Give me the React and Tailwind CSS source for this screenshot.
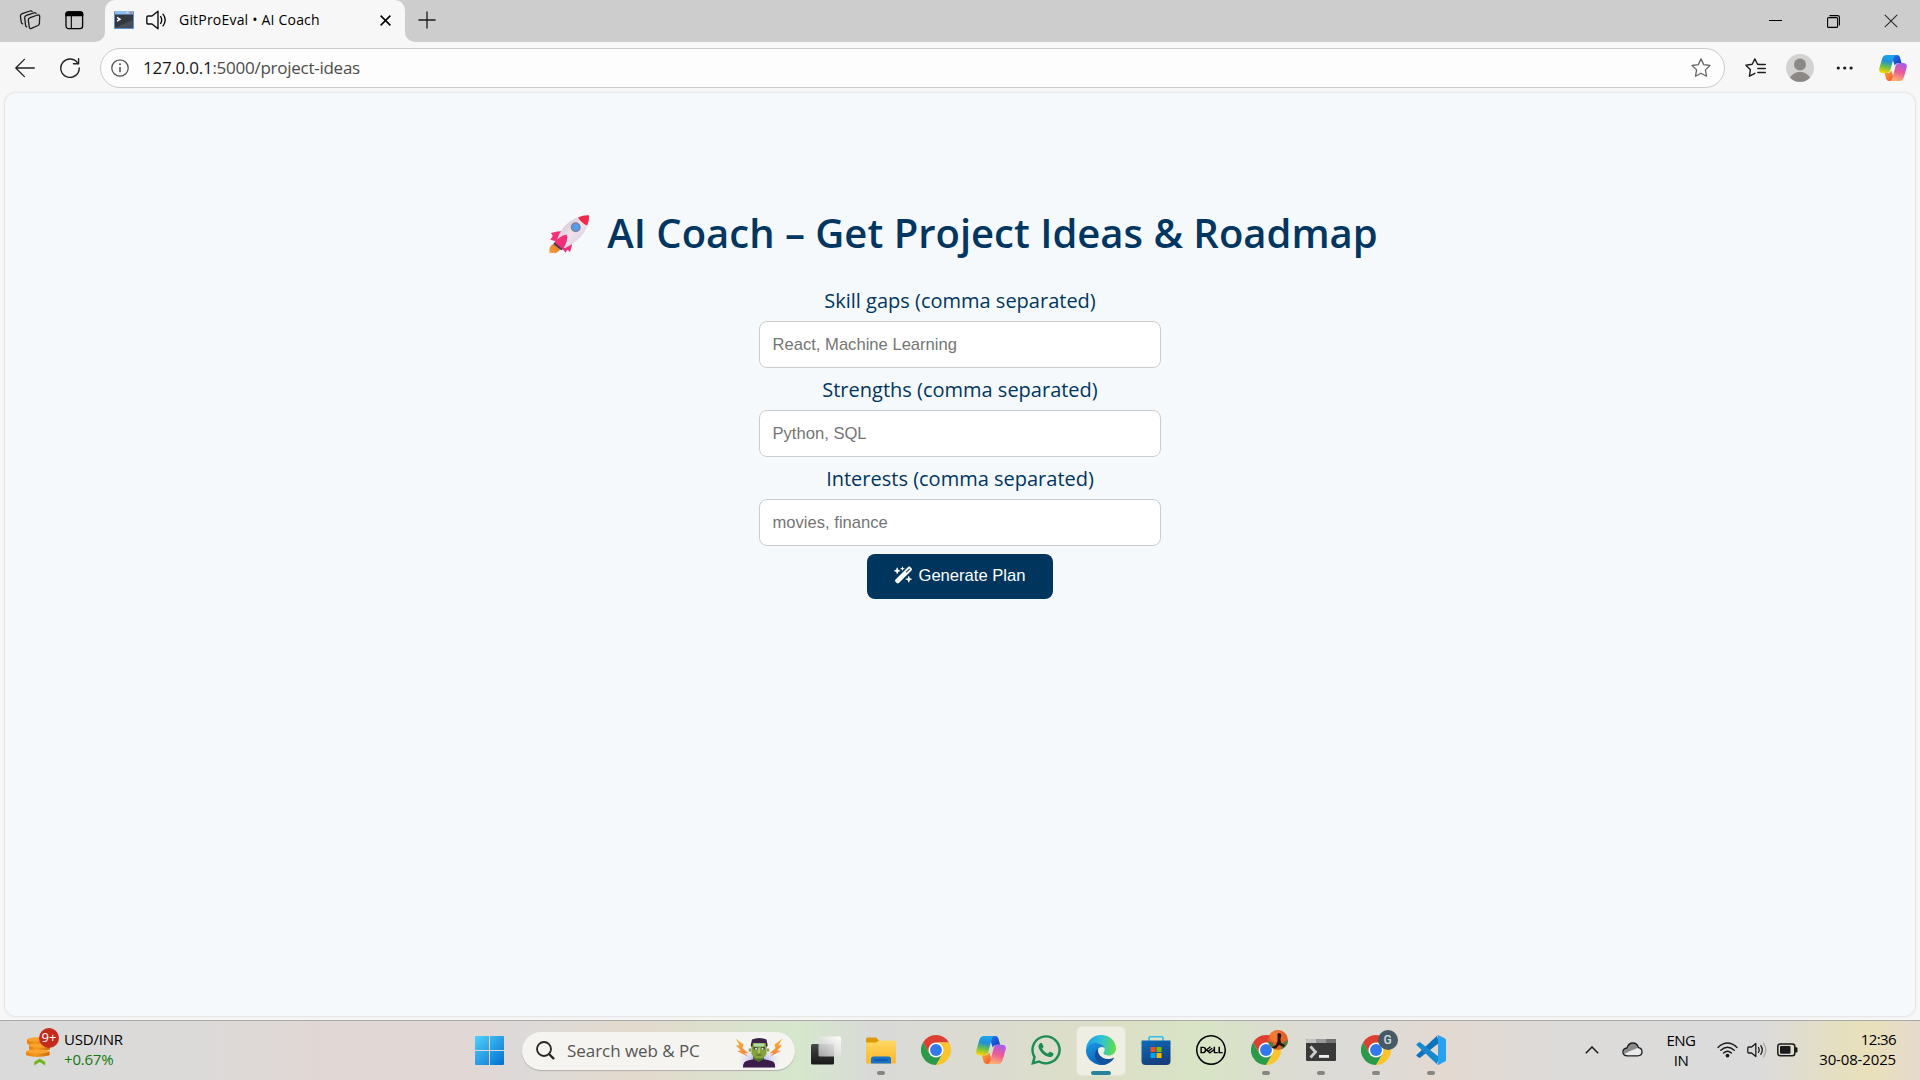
import React from "react";
import { FaWhatsapp } from "react-icons/fa";
import { FaWandMagicSparkles } from "react-icons/fa6";
import { SiDell } from "react-icons/si";

/* ---------- browser chrome icons ---------- */

const WorkspacesIcon = () => (
  <svg className="h-[20px] w-[22px]" viewBox="0 0 22 20" fill="none" stroke="#1b1b1b" strokeWidth="1.3" strokeLinejoin="round" strokeLinecap="round">
    <path d="M11.2 7.6 L18.6 5 Q20.6 4.6 20.7 6.4 L20.4 13.4 Q20.3 14.9 19 15.5 L12.4 18.4 Q10.6 19 10.3 17.2 L9.3 10 Q9.2 8.4 11.2 7.6Z" />
    <path d="M17 3.2 Q16.2 2.3 15 2.8 L7.4 5.3 Q5.5 6.1 5.7 7.8 L6.6 15.6 Q6.8 16.5 7.6 16.9" />
    <path d="M13.2 1.4 Q12.2 .6 11 1 L3.2 3.6 Q1.3 4.3 1.4 6.1 L2.3 12.4 Q2.5 13.5 3.6 13.9" />
  </svg>
);
const TabActionsIcon = () => (
  <svg className="h-[19px] w-[19px]" viewBox="0 0 19 19">
    <rect x="1" y="1" width="16.6" height="16.6" rx="2.6" fill="none" stroke="#000" strokeWidth="1.3" />
    <path d="M.3 5.2V3.2A2.8 2.8 0 0 1 3.1.3h12.4a2.8 2.8 0 0 1 2.8 2.9v2z" fill="#000" />
    <path d="M6.3 5v12.5" stroke="#000" strokeWidth="1.1" />
  </svg>
);
const Favicon = () => (
  <svg className="h-[18px] w-[20px]" viewBox="0 0 20 18">
    <rect width="20" height="18" rx="1" fill="#5b8fd0" />
    <rect x="1" width="18" height="3.4" fill="#8fbdf0" />
    <rect x="15.8" y=".6" width="2.4" height="2" fill="#e0696a" />
    <rect x="12.4" y=".8" width="2" height="1.4" fill="#d5e6fb" />
    <rect x="1" y="3.6" width="18" height="13.2" fill="#34383f" />
    <path d="M1 16.8 19 9v7.8z" fill="#4a4f57" />
    <path d="M3 6.4l3 1.9-3 1.9" fill="none" stroke="#fff" strokeWidth="1.5" />
  </svg>
);
const SpeakerIcon = () => (
  <svg className="h-[20px] w-[21px]" viewBox="0 0 21 20" fill="none" stroke="#111" strokeWidth="1.4" strokeLinejoin="round" strokeLinecap="round">
    <path d="M12 1.2v17.6L6 14H2.2Q.8 14 .8 12.600V7.400Q.8 6 2.200 6H6z" />
    <path d="M14.700 6.600q2 3.400 0 6.800M17 4.200q4.400 5.800 0 11.600" />
  </svg>
);
const CloseX = ({ big }) => (
  <svg className={big ? "h-[14px] w-[14px]" : "h-[11px] w-[11px]"} viewBox="0 0 14 14" stroke={big ? "#2a2a2a" : "#000"} strokeWidth={big ? 1.1 : 2}>
    <path d="M.8.8l12.400 12.400M13.200.8.8 13.200" />
  </svg>
);
const PlusIcon = () => (
  <svg className="h-[18px] w-[18px]" viewBox="0 0 18 18" stroke="#1b1b1b" strokeWidth="1.3"><path d="M9 .4v17.200M.4 9h17.200" /></svg>
);
const BackIcon = () => (
  <svg className="h-[20px] w-[20px]" viewBox="0 0 20 20" fill="none" stroke="#222" strokeWidth="1.3" strokeLinecap="round" strokeLinejoin="round"><path d="M19.300 10H.9M9.400 1.400.8 10l8.600 8.600" /></svg>
);
const ReloadIcon = () => (
  <svg className="h-[20px] w-[20px]" viewBox="0 0 20 20" fill="none" stroke="#222" strokeWidth="1.400" strokeLinecap="round" strokeLinejoin="round">
    <path d="M18 5.600A9.200 9.200 0 1 0 19.200 10" /><path d="M18.600.8v5h-5.200" />
  </svg>
);
const InfoIcon = () => (
  <svg className="h-[18px] w-[18px]" viewBox="0 0 18 18" fill="none" stroke="#555" strokeWidth="1.3">
    <circle cx="9" cy="9" r="8.200" /><path d="M9 8v5.200" strokeWidth="1.600" /><circle cx="9" cy="5.300" r="1" fill="#555" stroke="none" />
  </svg>
);
const StarIcon = () => (
  <svg className="h-[20px] w-[20px]" viewBox="0 0 20 20" fill="none" stroke="#666" strokeWidth="1.300" strokeLinejoin="round">
    <path d="M10 .9l2.700 5.700 6.300.9-4.600 4.400 1.100 6.300L10 15.200l-5.500 3 1.100-6.300L1 7.500l6.300-.9z" />
  </svg>
);
const FavoritesIcon = () => (
  <svg className="h-[20px] w-[21px]" viewBox="0 0 21 20" fill="none" stroke="#1f1f1f" strokeWidth="1.400" strokeLinejoin="round" strokeLinecap="round">
    <path d="M14 6.400l-1.500-.2L9.900.9 7.200 6.300l-6.300.9 4.500 4.500-1 6.500 5.500-2.900" />
    <path d="M13.500 6.500h6.800M12.800 10.500h7.500M12.800 14.500h7.500" />
  </svg>
);

const CopilotIcon = ({ id, className }) => (
  <svg className={className} viewBox="0 0 28 26">
    <defs>
      <linearGradient id={id + "a"} x1=".5" y1="0" x2=".3" y2="1">
        <stop offset="0" stopColor="#1aa5f0" /><stop offset=".35" stopColor="#2191d6" /><stop offset=".65" stopColor="#6cc04a" /><stop offset="1" stopColor="#ffd400" />
      </linearGradient>
      <linearGradient id={id + "b"} x1=".7" y1="0" x2=".4" y2="1">
        <stop offset="0" stopColor="#a65cf0" /><stop offset=".5" stopColor="#ec5a95" /><stop offset="1" stopColor="#ffb070" />
      </linearGradient>
      <linearGradient id={id + "c"} x1="0" y1="0" x2="1" y2="1"><stop offset="0" stopColor="#2a7ff0" /><stop offset="1" stopColor="#0a35b8" /></linearGradient>
      <linearGradient id={id + "d"} x1="0" y1="0" x2="1" y2="1"><stop offset="0" stopColor="#ffb02a" /><stop offset="1" stopColor="#f0483a" /></linearGradient>
    </defs>
    <path d="M12 0h6q2.200 0 2.900 2.300L22.500 8h-3.300q-2.600 0-3.500 2.600z" fill={`url(#${id}c)`} />
    <path d="M15.800 26H10q-2.200 0-2.900-2.300L5.500 18h3.300q2.600 0 3.500-2.600z" fill={`url(#${id}d)`} />
    <path d="M7.500 0H17q-1.700.5-2.400 3L11.400 15.200Q10.600 18 8 18H4Q-.8 18 .4 13L3.200 3.500Q4.200 0 7.500 0z" fill={`url(#${id}a)`} />
    <path d="M20.500 26H11q1.700-.5 2.400-3l3.200-12.200Q17.400 8 20 8h4q4.800 0 3.600 5l-2.800 9.500Q23.800 26 20.500 26z" fill={`url(#${id}b)`} />
  </svg>
);

const Avatar = () => (
  <svg className="h-[28px] w-[28px]" viewBox="0 0 28 28">
    <circle cx="14" cy="14" r="14" fill="#d3d2d0" />
    <circle cx="14" cy="10.500" r="6" fill="#8b8886" />
    <path d="M4 23.700q3.500-5.600 10-5.600t10 5.600A14 14 0 0 1 4 23.700z" fill="#8b8886" />
  </svg>
);

const Rocket = () => (
  <svg className="h-[40px] w-[41px]" viewBox="0 0 41 40">
    <defs>
      <linearGradient id="rkb" x1="0" y1="0" x2="1" y2="1"><stop offset="0" stopColor="#c3b6c8" /><stop offset=".5" stopColor="#efe3ee" /><stop offset="1" stopColor="#d3c2d4" /></linearGradient>
      <linearGradient id="rkf" x1="1" y1="0" x2="0" y2="1"><stop offset="0" stopColor="#d9762e" /><stop offset="1" stopColor="#ff9c33" /></linearGradient>
      <linearGradient id="rkr" x1="0" y1="0" x2="1" y2="1"><stop offset="0" stopColor="#ff2f6e" /><stop offset="1" stopColor="#e82f83" /></linearGradient>
    </defs>
    <path d="M6 29.500Q1.500 30.500.6 34.500L.4 39.200q1.700-.8 3 0l1.500-.7 1.200.9Q11 37 11.500 34.500z" fill="url(#rkf)" />
    <path d="M2 19q6-2 12.500-2L8 27.500 1.300 25.800 3.800 22z" fill="url(#rkr)" />
    <path d="M23.500 25.500q-.2 6.500-2.400 12.500l-2.800-2.200-1.800 3-3.300-4.300z" fill="url(#rkr)" />
    <path d="M29.500 3.200Q13.500 8.500 7.500 27l8 7.200Q33.500 26 39 10.500z" fill="url(#rkb)" />
    <path d="M29 3.400Q34.500.8 40 1.200q.6 5-1.800 10.300Q32.500 9 29 3.400z" fill="#f0284a" />
    <path d="M4.800 29.200Q10 22 17.800 20.500 20 25 13.800 35.600z" fill="url(#rkr)" />
    <path d="M5.500 28.600l8.300 6.700-1.500 1L4.400 30z" fill="#41375f" />
    <circle cx="26.700" cy="13.200" r="5" fill="#82809a" /><circle cx="26.700" cy="13.200" r="3.500" fill="#4f9df0" />
  </svg>
);

/* ---------- taskbar icons ---------- */

const Coins = () => (
  <svg className="h-[38px] w-[34px]" viewBox="0 0 34 38">
    <defs><linearGradient id="coin" x1="0" y1="0" x2="1" y2="0"><stop offset="0" stopColor="#e87f08" /><stop offset=".4" stopColor="#f39a20" /><stop offset="1" stopColor="#d06505" /></linearGradient></defs>
    <path d="M1 9.500v4q5 4.500 21 0v-4z" fill="url(#coin)" /><ellipse cx="11.500" cy="9.500" rx="10.600" ry="2.200" fill="#fba330" />
    <path d="M3 15.500v4q9 4 21 0v-4z" fill="url(#coin)" /><ellipse cx="13.500" cy="15.500" rx="10.500" ry="2" fill="#fba330" />
    <path d="M0 21.500v3.700q11.500 3.600 23.500 0v-3.700z" fill="url(#coin)" /><ellipse cx="11.700" cy="21.500" rx="11.700" ry="2" fill="#fba330" />
    <path d="M8.200 35.500v-3.400L13.700 28.500l5.500 3.600v3.400l-5.500-3.400z" fill="#6fb51c" />
  </svg>
);
const StartIcon = () => (
  <svg className="h-[29px] w-[29px]" viewBox="0 0 29 29">
    <defs><linearGradient id="win" x1="0" y1="0" x2="1" y2="1"><stop offset="0" stopColor="#4fd0fc" /><stop offset="1" stopColor="#0270d0" /></linearGradient></defs>
    <path fill="url(#win)" d="M1 0h13v14H0V1Q0 0 1 0zM15 0h13q1 0 1 1v13H15zM0 15h14v14H1q-1 0-1-1zM15 15h14v13q0 1-1 1H15z" />
  </svg>
);
const SearchIcon = () => (
  <svg className="h-[19px] w-[19px]" viewBox="0 0 19 19" fill="none" stroke="#262626" strokeLinecap="round"><circle cx="8" cy="8" r="7" strokeWidth="1.800" /><path d="M13.200 13.200l4.200 4.200" strokeWidth="2.300" /></svg>
);
const Frankenstein = () => (
  <svg className="h-[32px] w-[50px]" viewBox="0 0 50 32">
    <defs>
      <radialGradient id="frg"><stop offset="0" stopColor="#8a7cf0" stopOpacity=".8" /><stop offset="1" stopColor="#c7c4ff" stopOpacity="0" /></radialGradient>
      <linearGradient id="frb" x1="0" y1="0" x2="0" y2="1"><stop offset="0" stopColor="#ffb22e" /><stop offset="1" stopColor="#f0813f" /></linearGradient>
      <clipPath id="frc"><rect width="50" height="30.500" /></clipPath>
    </defs>
    <g clipPath="url(#frc)">
      <ellipse cx="25" cy="24" rx="21" ry="14" fill="url(#frg)" />
      <path d="M9 31q-.5-6.500 5-7.500l7-1.700h7l8 1.700q6 1 5 7.500z" fill="#3b1c4a" />
      <path d="M19 18h11v4l-5.500 3L19 22z" fill="#4d6b2a" />
      <path d="M17.500 6h15v11l-3.500 4.500h-8L17.500 17z" fill="#86a23c" />
      <path d="M16.700 8.500L18 2.500Q25-.5 32.500 2.500L33.700 8.500l-1.200 2-1-4.500H19l-1 4.500z" fill="#3b2348" />
      <path d="M19.500 6.500h11l-.5 3H20z" fill="#afd9a5" />
      <path d="M19.500 10h4v2.500h-4zM27 10h4v2.500h-4z" fill="#4a4a40" /><circle cx="22" cy="11.700" r="1" fill="#dce9ff" /><circle cx="28.500" cy="11.700" r="1" fill="#dce9ff" />
      <path d="M24 11h2v5h-2z" fill="#b0c650" /><path d="M22.500 18h5" stroke="#4f5b32" strokeWidth="1" />
      <path d="M14.800 11.500h2.500v3h-2.500zM32.700 11.500h2.500v3h-2.500z" fill="#8ba04a" />
    </g>
    <path d="M1.500 1.500l8 6-1 3.500 6 5.500-4-.5 3.500 3.500L3 14l4-.5-5-5 3.500-.5z" fill="url(#frb)" />
    <path d="M48.500 1.500l-8 6 1 3.500-6 5.500 4-.5-3.500 3.500L47 14l-4-.5 5-5-3.500-.5z" fill="url(#frb)" />
  </svg>
);
const TaskViewIcon = () => (
  <svg className="h-[29px] w-[30px]" viewBox="0 0 30 29">
    <defs>
      <linearGradient id="tvd" x1="0" y1="0" x2="0" y2="1"><stop offset="0" stopColor="#474747" /><stop offset="1" stopColor="#181818" /></linearGradient>
      <linearGradient id="tvl" x1="1" y1="0" x2="0" y2="1"><stop offset="0" stopColor="#fff" stopOpacity=".98" /><stop offset="1" stopColor="#c4c4c4" stopOpacity=".8" /></linearGradient>
    </defs>
    <rect x="0" y="8" width="23" height="20.500" rx="1.500" fill="url(#tvd)" /><rect x="7.500" y=".5" width="22.500" height="20" rx="1.500" fill="url(#tvl)" />
  </svg>
);
const ExplorerIcon = () => (
  <svg className="h-[27px] w-[30px]" viewBox="0 0 30 27">
    <defs><linearGradient id="fol" x1="0" y1="0" x2="0" y2="1"><stop offset="0" stopColor="#ffd762" /><stop offset="1" stopColor="#fbb72a" /></linearGradient></defs>
    <path d="M0 2Q0 .5 1.500.5H10l3.500 3.500V8H0z" fill="#dd9a06" />
    <path d="M0 5.500h10L13 3.600h15.500q1.500 0 1.500 1.500v21.400H0z" fill="url(#fol)" />
    <path d="M5 26.500V22q0-2.500 2.500-2.500h15q2.500 0 2.500 2.500v4.500z" fill="#1473c8" /><rect x="8.500" y="22.500" width="13" height="1.200" fill="#0b4e95" />
  </svg>
);
const ChromeIcon = () => (
  <svg className="h-[30px] w-[30px]" viewBox="0 0 48 48">
    <circle cx="24" cy="24" r="12" fill="#fff" />
    <path d="M24,12H44.7812a23.9939,23.9939,0,0,0-41.5639.0029L13.6079,30l.0093-.0024A11.9852,11.9852,0,0,1,24,12Z" fill="#dd4033" />
    <circle cx="24" cy="24" r="9.500" fill="#3279ea" />
    <path d="M34.3913,30.0029,24.0007,48A23.994,23.994,0,0,0,44.78,12.0031H23.9989l-.0025.0093A11.985,11.985,0,0,1,34.3913,30.0029Z" fill="#fcc52b" />
    <path d="M13.6086,30.0031,3.218,12.006A23.994,23.994,0,0,0,24.0025,48L34.3931,30.0029l-.0067-.0068a11.9852,11.9852,0,0,1-20.7778.007Z" fill="#2b9a4a" />
  </svg>
);
const EdgeIcon = () => (
  <svg className="h-[30px] w-[30px]" viewBox="0 0 30 30">
    <defs>
      <linearGradient id="ed1" x1="0" y1=".4" x2="1" y2=".5"><stop offset="0" stopColor="#1ca0e8" /><stop offset=".5" stopColor="#2fc1d8" /><stop offset=".8" stopColor="#4dd47c" /><stop offset="1" stopColor="#66dc48" /></linearGradient>
      <linearGradient id="ed2" x1=".2" y1="0" x2=".6" y2="1"><stop offset="0" stopColor="#1b95e0" /><stop offset="1" stopColor="#0b5fb8" /></linearGradient>
      <linearGradient id="ed3" x1="0" y1="0" x2="1" y2=".6"><stop offset="0" stopColor="#0d4f9f" /><stop offset="1" stopColor="#14539a" /></linearGradient>
    </defs>
    <path d="M0 14C.7 6 7 0 15 0c9 0 15 6.300 15 13.500 0 4.500-3.500 7-7 7-3 0-5.600-1.100-5.600-2.300 0-.8 1.300-1.500 1.300-3.700C18.700 11 15 8 9.500 8 5 8 1.500 10.500 0 14z" fill="url(#ed1)" />
    <path d="M0 14.500C.8 10.500 4.800 7.500 9.700 7.700c4.600.2 8 2.500 8.700 5.300-1.600-1.500-4.400-1.500-6 .5-2.300 3-1.700 8.500 2 12.500 1.600 1.700 3.600 3.200 6 3.300C17 30.600 12 30.300 8 28 2.500 25-.5 20 0 14.500z" fill="url(#ed2)" />
    <path d="M12.200 13.400C8 16 7.800 22.500 11.500 26.500c2.500 2.800 6.300 3.500 9 2.700 3-1 5.500-2.900 7.200-5.400.5-.8 0-1.300-.8-.9-1.500.7-3.500 1.200-5.500 1-5.500-.4-10.500-4.900-9.200-10.500z" fill="url(#ed3)" />
  </svg>
);
const StoreIcon = () => (
  <svg className="h-[30px] w-[30px]" viewBox="0 0 30 30">
    <defs><linearGradient id="sto" x1=".2" y1="0" x2=".6" y2="1"><stop offset="0" stopColor="#0f68b8" /><stop offset="1" stopColor="#173d78" /></linearGradient></defs>
    <path d="M8 6V3q0-1.200 1.200-1.200h11.600Q22 1.800 22 3v3" fill="none" stroke="#33bdf0" strokeWidth="1.600" />
    <path d="M.5 5.500h29V26q0 4-4 4h-21q-4 0-4-4z" fill="url(#sto)" />
    <path d="M9.500 12h5v5h-5z" fill="#f25022" /><path d="M15.500 12h5v5h-5z" fill="#7fba00" /><path d="M9.500 18h5v5h-5z" fill="#00a4ef" /><path d="M15.500 18h5v5h-5z" fill="#ffb900" />
  </svg>
);
const TerminalIcon = () => (
  <svg className="h-[22px] w-[30px]" viewBox="0 0 30 22">
    <rect width="30" height="22" rx="1" fill="#3a3a3b" /><path d="M1 0h9v4H0V1q0-1 1-1z" fill="#c2c2c2" /><path d="M10 0h10v4H10z" fill="#999" /><path d="M20 0h9q1 0 1 1v3H20z" fill="#737373" />
    <path d="M4.500 7.500L9.500 13l-5 5.500" fill="none" stroke="#ccc" strokeWidth="2.800" /><rect x="13" y="16" width="10" height="2.800" fill="#efefef" />
  </svg>
);
const VsCodeIcon = () => (
  <svg className="h-[30px] w-[30px]" viewBox="0 0 30 30">
    <path d="M1 19.600L21 .7 23 8 4.400 22.600q-.9.700-1.700 0L.7 21q-.8-.8.300-1.400z" fill="#0f72bd" />
    <path d="M1 10.400L21 29.300 23 22 4.400 7.400q-.9-.7-1.700 0L.7 9q-.8.8.300 1.400z" fill="#1688d0" />
    <path d="M20.600.9q.8-1.100 2-.6l6 2.900q1.400.7 1.400 2v19.600q0 1.300-1.400 2l-6 2.900q-1.200.5-2-.6 1.400.8 1.400-.9V1.800q0-1.700-1.400-.9z" fill="#27a2ee" />
  </svg>
);

const ProfilePhoto = () => (
  <svg className="h-[20px] w-[20px]" viewBox="0 0 20 20">
    <clipPath id="ppc"><circle cx="10" cy="10" r="10" /></clipPath>
    <g clipPath="url(#ppc)">
      <rect width="20" height="20" fill="#e2622a" /><circle cx="8" cy="6" r="6" fill="#f07a35" />
      <path d="M0 11l5 2 2 7H0zM14 13l6-3v10h-7z" fill="#507a45" />
      <path d="M11 3q2.500 0 2.300 3L12.500 9l.5 4 4 2-1 2-5-2-3 3.500-4-.5 1-1.500 3-1.500 1.500-4V6q-.5-3 1.500-3z" fill="#2b120c" />
    </g>
  </svg>
);

const TaskItem = ({ children, indicator, active, badge }) => (
  <div className="flex h-full w-[55px] items-center justify-center">
    <div className={"relative flex h-[48px] w-[48px] items-center justify-center rounded-[5px] pb-px " + (active ? "bg-[#eeefe2] shadow-[0_0_0_1px_#e3e4d6]" : "")}>
      {children}
      {badge && <div className="absolute right-[2px] top-[3px]">{badge}</div>}
      {indicator && <div className={"absolute bottom-0 h-[4px] rounded-full " + (active ? "w-[20px] bg-[#27839a]" : "w-[8px] bg-[#858582]")} />}
    </div>
  </div>
);

const WifiIcon = () => (
  <svg className="h-[16px] w-[21px]" viewBox="0 0 21 16" fill="none" stroke="#1a1a1a" strokeWidth="1.400" strokeLinecap="round">
    <path d="M1 5.400q9.500-8.600 19 0M3.800 8.300q6.700-6 13.400 0M6.600 11q3.900-3.400 7.800 0" /><circle cx="10.500" cy="13.600" r="1.900" fill="#1a1a1a" stroke="none" />
  </svg>
);
const VolumeIcon = () => (
  <svg className="h-[18px] w-[20px]" viewBox="0 0 20 18" fill="none" stroke="#1a1a1a" strokeWidth="1.300" strokeLinejoin="round" strokeLinecap="round">
    <path d="M8.800 2.400v13.200L4.600 12H1.700Q.8 12 .8 11V7q0-1 .9-1h2.900z" /><path d="M11.500 6.600q1.600 2.400 0 4.800M13.800 4.600q3 4.400 0 8.800" /><path d="M16.500 2.200q4.600 6.800 0 13.600" stroke="#aaa" />
  </svg>
);
const BatteryIcon = () => (
  <svg className="h-[14px] w-[21px]" viewBox="0 0 21 14"><rect x=".8" y=".9" width="17" height="11.900" rx="2.500" fill="none" stroke="#1a1a1a" strokeWidth="1.500" /><rect x="3" y="3" width="10.500" height="7.700" rx="1" fill="#1a1a1a" /><path d="M18 4.200h1.300q1.200 0 1.200 1.200v2.900q0 1.200-1.200 1.200H18z" fill="#1a1a1a" /></svg>
);
const CloudIcon = () => (
  <svg className="h-[15px] w-[21px]" viewBox="0 0 21 15">
    <path d="M5 6Q6.500 1 11 1q4 0 5.500 4.600 3.500.6 3.500 4.200 0 4-4.300 4H5.300q-4.400 0-4.400-4Q.9 6.500 5 6z" fill="#e9e9e9" />
    <path d="M5 6Q6.500 1 11 1q4 0 5.500 4.600L12 7.500 8 9 2 12Q-.5 7 5 6z" fill="#8a8a8a" />
    <path d="M5 6Q6.500 1 11 1q4 0 5.500 4.600 3.500.6 3.500 4.200 0 4-4.300 4H5.300q-4.400 0-4.400-4Q.9 6.500 5 6z" fill="none" stroke="#1f1f1f" strokeWidth="1.300" />
  </svg>
);

const Field = ({ label, placeholder }) => (
  <label className="flex flex-col items-center">
    <span className="flex h-[42px] items-center pt-[2px] font-['Open_Sans',sans-serif] text-[20px] text-[#003660]">{label}</span>
    <input className="h-[47px] w-[402px] rounded-[8px] border border-[#ccc] bg-white px-[12.500px] font-['Liberation_Sans',Arial,sans-serif] text-[16.600px] text-black outline-none placeholder:text-[#757575]" placeholder={placeholder} />
  </label>
);

export default function App() {
  return (
    <div className="flex h-[1080px] w-[1920px] flex-col overflow-hidden bg-[#f7f7f7] font-['Open_Sans',sans-serif] text-black">
      <header className="flex h-[43px] shrink-0 bg-[#f7f7f7]">
        <div className="flex h-[42px] w-[105px] items-center gap-[24px] rounded-br-[10px] bg-[#cdcdcd] pb-[2px] pl-[19px]">
          <WorkspacesIcon />
          <TabActionsIcon />
        </div>
        <div className="h-full w-[300px] bg-[linear-gradient(#cdcdcd_20px,#f7f7f7_20px)]">
          <div className="flex h-full items-center rounded-t-[10px] bg-[#f7f7f7] pb-[3px] pl-[9px] pr-[14px]">
            <Favicon />
            <span className="ml-[12px]"><SpeakerIcon /></span>
            <span className="ml-[12px] whitespace-nowrap pb-[2px] text-[14px] tracking-[0.2px]">GitProEval • AI Coach</span>
            <span className="ml-auto mt-px"><CloseX /></span>
          </div>
        </div>
        <div className="flex h-[42px] flex-1 items-center rounded-bl-[10px] bg-[#cdcdcd] pb-[3px] pl-[13px] pr-[22px]">
          <PlusIcon />
          <div className="ml-auto flex items-center">
            <div className="mr-[45px] mt-[2px] h-px w-[13px] bg-black" />
            <svg className="mr-[44px] mt-[3px] h-[13px] w-[13px]" viewBox="0 0 13 13" fill="none" stroke="#000" strokeWidth="1.100"><rect x=".6" y="2.600" width="10" height="9.800" rx="1" /><path d="M2.500.6h8.200q1.700 0 1.700 1.700v8.200" /></svg>
            <span className="mt-[3px]"><CloseX big /></span>
          </div>
        </div>
      </header>

      <nav className="flex h-[50px] shrink-0 items-center pl-[15px] pr-[13px]">
        <BackIcon />
        <span className="ml-[25px]"><ReloadIcon /></span>
        <div className="ml-[20px] flex h-[40px] w-[1625px] items-center rounded-full border border-[#cbcbcb] bg-[#fdfdfd] pl-[10px] pr-[13px]">
          <InfoIcon />
          <span className="ml-[14px] pb-px text-[17px] tracking-[-0.26px] text-[#4c4c4c]"><span className="text-[#161616]">127.0.0.1</span>:5000/project-ideas</span>
          <span className="ml-auto"><StarIcon /></span>
        </div>
        <div className="ml-auto flex items-center">
          <FavoritesIcon />
          <span className="ml-[20px]"><Avatar /></span>
          <svg className="ml-[22px] h-[4px] w-[18px]" viewBox="0 0 18 4" fill="#1a1a1a"><circle cx="2.300" cy="2" r="1.600" /><circle cx="8.700" cy="2" r="1.600" /><circle cx="15.100" cy="2" r="1.600" /></svg>
          <span className="ml-[25px]"><CopilotIcon id="ca" className="h-[26px] w-[28px]" /></span>
        </div>
      </nav>

      <main className="mx-[5px] h-[923px] shrink-0 rounded-[11px] bg-[#f5f9fc] pt-[113px] shadow-[0_0_2px_1px_#e2e2e2]">
        <h1 className="flex h-[54px] items-center justify-center gap-[17px] pl-[7px] text-[40px] font-semibold text-[#003660]">
          <span className="pt-px"><Rocket /></span>
          <span>AI Coach – Get Project Ideas &amp; Roadmap</span>
        </h1>
        <form className="mt-[19px] flex flex-col items-center">
          <Field label="Skill gaps (comma separated)" placeholder="React, Machine Learning" />
          <Field label="Strengths (comma separated)" placeholder="Python, SQL" />
          <Field label="Interests (comma separated)" placeholder="movies, finance" />
          <button type="button" className="mt-[8px] flex h-[45px] w-[186px] items-center justify-center gap-[5px] rounded-[8px] bg-[#00365e] pb-[1px] font-['Liberation_Sans',Arial,sans-serif] text-[16.600px] text-white">
            <FaWandMagicSparkles className="mb-[3px] h-[18px] w-[19px]" />
            <span>Generate Plan</span>
          </button>
        </form>
      </main>

      <footer className="mt-[4px] flex h-[60px] shrink-0 items-center border-t border-[#a9aaa6] bg-[linear-gradient(90deg,#dadada_0px,#dcdad9_200px,#e1d7d4_330px,#e1d7d5_480px,#dcdad9_520px,#e3dacd_640px,#d5e7cd_800px,#d9dad8_870px,#dbdbd3_960px,#dcdfc6_1110px,#d8e4c6_1210px,#dcddd0_1270px,#dcdbd8_1340px,#e3d9d1_1450px,#dcdbda_1570px,#dcdbdb_1760px,#e5dfc0_1840px,#e9e0bb_1870px,#e5dace_1920px)]">
        <div className="flex w-[475px] items-center pb-[3px] pl-[26px]">
          <div className="relative"><Coins /><div className="absolute left-[13px] top-[-2px] flex h-[20px] w-[20px] items-center justify-center rounded-full bg-[#c42b1c] text-[13px] text-white">9+</div></div>
          <div className="ml-[4px] text-[15px] leading-[20px] tracking-[-0.2px]"><div>USD/INR</div><div className="text-[#0f7b0f]">+0.67%</div></div>
        </div>
        <StartIcon />
        <div className="ml-[18px] flex h-[38px] w-[273px] items-center rounded-full bg-[#f5f4f0] pl-[14px] pr-[11px] shadow-[0_1px_1px_#b4afa8]">
          <SearchIcon />
          <span className="ml-[12px] whitespace-nowrap text-[17px] tracking-[-0.05px] text-[#555]">Search web &amp; PC</span>
          <span className="ml-auto mt-[4px]"><Frankenstein /></span>
        </div>
        <div className="ml-[3px] flex h-full">
          <TaskItem><TaskViewIcon /></TaskItem>
          <TaskItem indicator><ExplorerIcon /></TaskItem>
          <TaskItem><ChromeIcon /></TaskItem>
          <TaskItem><CopilotIcon id="cb" className="h-[28px] w-[30px]" /></TaskItem>
          <TaskItem><FaWhatsapp className="h-[34px] w-[34px] text-[#1e8c56]" /></TaskItem>
          <TaskItem active indicator><EdgeIcon /></TaskItem>
          <TaskItem><StoreIcon /></TaskItem>
          <TaskItem><SiDell className="h-[30px] w-[30px] text-black" /></TaskItem>
          <TaskItem indicator badge={<ProfilePhoto />}><ChromeIcon /></TaskItem>
          <TaskItem indicator><TerminalIcon /></TaskItem>
          <TaskItem indicator badge={<div className="flex h-[20px] w-[20px] items-center justify-center rounded-full bg-[#455a64] font-['Roboto',sans-serif] text-[12px] font-medium text-[#d5dde0]">G</div>}><ChromeIcon /></TaskItem>
          <TaskItem indicator><VsCodeIcon /></TaskItem>
        </div>
        <div className="ml-auto flex items-center pb-[2px] pr-[24px]">
          <svg className="h-[8px] w-[14px]" viewBox="0 0 14 8" fill="none" stroke="#1a1a1a" strokeWidth="1.500"><path d="M.8 7.200L7 1l6.200 6.200" /></svg>
          <span className="ml-[23px]"><CloudIcon /></span>
          <div className="ml-[22px] w-[32px] text-center text-[15px] leading-[20px] tracking-[-0.5px]"><div>ENG</div><div>IN</div></div>
          <span className="ml-[20px]"><WifiIcon /></span>
          <span className="ml-[9px]"><VolumeIcon /></span>
          <span className="ml-[10px]"><BatteryIcon /></span>
          <div className="ml-[21px] w-[77px] whitespace-nowrap pb-[2px] text-right text-[15px] leading-[20px] tracking-[-0.15px]"><div className="tracking-[-0.6px]">12:36</div><div>30-08-2025</div></div>
        </div>
      </footer>
    </div>
  );
}
